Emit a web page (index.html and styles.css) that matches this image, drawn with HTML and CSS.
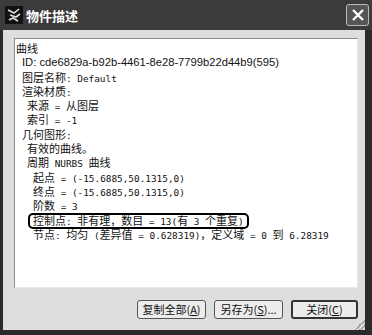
FILE: index.html
```html
<!DOCTYPE html>
<html lang="zh-CN">
<head>
  <meta charset="UTF-8" />
  <title>物件描述</title>
  <link rel="stylesheet" href="styles.css">
</head>
<body>
  <div class="window">
    <div class="titlebar">
      <svg class="app-icon" width="18" height="18" viewBox="0 0 18 18">
        <rect x="0" y="0" width="18" height="18" fill="#111"/>
        <path d="M3 4 L9 7 L14 3 M5 9 L11 11 L15 8 M4 14 L8 12 L13 15" stroke="#ddd" stroke-width="1.6" fill="none"/>
      </svg>
      <span class="title">物件描述</span>
      <div class="close-btn">
        <svg width="14" height="14" viewBox="0 0 14 14">
          <path d="M2 2 L12 12 M12 2 L2 12" stroke="#fff" stroke-width="2.4"/>
        </svg>
      </div>
    </div>

    <div class="dialog">
      <div class="text-box">
        <div class="line">曲线</div>
        <div class="line ind1 latin">ID: cde6829a-b92b-4461-8e28-7799b22d44b9(595)</div>
        <div class="line ind1">图层名称<span class="m">: Default</span></div>
        <div class="line ind1">渲染材质<span class="m">:</span></div>
        <div class="line ind2">来源<span class="m"> = </span>从图层</div>
        <div class="line ind2">索引<span class="m"> = -1</span></div>
        <div class="line ind1">几何图形<span class="m">:</span></div>
        <div class="line ind2">有效的曲线。</div>
        <div class="line ind2">周期<span class="m"> NURBS </span>曲线</div>
        <div class="line ind3">起点<span class="m"> = (-15.6885,50.1315,0)</span></div>
        <div class="line ind3">终点<span class="m"> = (-15.6885,50.1315,0)</span></div>
        <div class="line ind3">阶数<span class="m"> = 3</span></div>
        <div class="line ind3"><span class="mark">控制点<span class="m">: </span>非有理，数目<span class="m"> = 13(</span>有<span class="m"> 3 </span>个重复<span class="m">)</span></span></div>
        <div class="line ind3">节点<span class="m">: </span>均匀<span class="m"> (</span>差异值<span class="m"> = 0.628319)</span>，定义域<span class="m"> = 0 </span>到<span class="m"> 6.28319</span></div>
      </div>

      <div class="buttons">
        <button class="btn">复制全部(<u>A</u>)</button>
        <button class="btn">另存为(<u>S</u>)...</button>
        <button class="btn default">关闭(<u>C</u>)</button>
      </div>
      <div class="grip"></div>
    </div>
  </div>
</body>
</html>
```

FILE: styles.css
```css
body {
  margin: 0;
  background: #262626;
  font-family: "Noto Sans CJK SC", "Liberation Sans", sans-serif;
}

.window {
  width: 372px;
  height: 335px;
  display: flex;
  flex-direction: column;
  background: #2a2a2a;
}

.titlebar {
  height: 30px;
  display: flex;
  align-items: center;
  padding: 0 3px 0 5px;
  background: #3b3b3b;
  box-sizing: border-box;
}

.app-icon {
  margin-right: 3px;
}

.title {
  color: #fff;
  font-weight: bold;
  font-size: 13px;
  flex: 1;
}

.close-btn {
  width: 21px;
  height: 20px;
  border: 1px solid #bbb;
  border-radius: 3px;
  background: #555;
  display: flex;
  align-items: center;
  justify-content: center;
}

.dialog {
  flex: 1;
  margin: 0 7px 5px 3px;
  padding: 8px 7px 0 11px;
  background: #dedede;
  display: flex;
  flex-direction: column;
  position: relative;
}

.text-box {
  height: 250px;
  box-sizing: border-box;
  background: #fff;
  border: 1px solid #8a8a8a;
  border-right-color: #e8e8e8;
  border-bottom-color: #e8e8e8;
  padding: 2px 0 0 1px;
  font-size: 11px;
  color: #111;
}

.line {
  height: 14.3px;
  line-height: 14.3px;
  white-space: pre;
}

.ind1 { padding-left: 6px; }
.ind2 { padding-left: 11px; }
.ind3 { padding-left: 17px; }

.latin {
  font-family: "Liberation Sans", sans-serif;
  font-size: 11.2px;
}

.m {
  font-family: "DejaVu Sans Mono", monospace;
  font-size: 9.4px;
}

.mark {
  display: inline-block;
  border: 2px solid #000;
  border-radius: 5px;
  padding: 0 3px;
  margin-left: -5px;
  line-height: 10.3px;
}

.buttons {
  display: flex;
  justify-content: flex-end;
  gap: 8px;
  margin-top: 12px;
}

.btn {
  height: 19px;
  width: 69px;
  padding: 0;
  font-family: "Noto Sans CJK SC", sans-serif;
  font-size: 11px;
  color: #111;
  background: #ececec;
  border: 1px solid #555;
  border-radius: 3px;
  line-height: 15px;
}

.btn.default {
  width: 67px;
  border: 2px solid #333;
}

.grip {
  position: absolute;
  right: 0;
  bottom: 0;
  width: 10px;
  height: 10px;
  background: linear-gradient(135deg, transparent 45%, #999 45%, #999 55%, transparent 55%, transparent 70%, #999 70%, #999 80%, transparent 80%);
}
```
